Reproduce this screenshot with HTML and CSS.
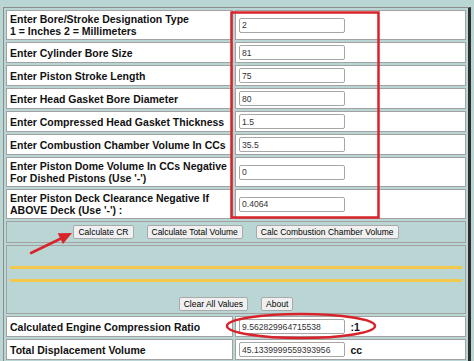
FILE: index.html
```html
<!DOCTYPE html>
<html lang="en">
<head>
  <meta charset="UTF-8">
  <title>Compression Ratio Calculator</title>
  <link rel="stylesheet" href="styles.css">
</head>
<body>
  <table class="calc">
    <tr>
      <td class="label">Enter Bore/Stroke Designation Type<br>1 = Inches 2 = Millimeters</td>
      <td class="field"><input type="text" value="2"></td>
    </tr>
    <tr>
      <td class="label">Enter Cylinder Bore Size</td>
      <td class="field"><input type="text" value="81"></td>
    </tr>
    <tr>
      <td class="label">Enter Piston Stroke Length</td>
      <td class="field"><input type="text" value="75"></td>
    </tr>
    <tr>
      <td class="label">Enter Head Gasket Bore Diameter</td>
      <td class="field"><input type="text" value="80"></td>
    </tr>
    <tr>
      <td class="label">Enter Compressed Head Gasket Thickness</td>
      <td class="field"><input type="text" value="1.5"></td>
    </tr>
    <tr>
      <td class="label">Enter Combustion Chamber Volume In CCs</td>
      <td class="field"><input type="text" value="35.5"></td>
    </tr>
    <tr>
      <td class="label">Enter Piston Dome Volume In CCs Negative<br>For Dished Pistons (Use '-')</td>
      <td class="field"><input type="text" value="0"></td>
    </tr>
    <tr>
      <td class="label">Enter Piston Deck Clearance Negative If<br>ABOVE Deck (Use '-') :</td>
      <td class="field"><input type="text" value="0.4064"></td>
    </tr>
    <tr>
      <td colspan="2" class="buttons">
        <div class="actions">
          <button>Calculate CR</button>
          <button>Calculate Total Volume</button>
          <button>Calc Combustion Chamber Volume</button>
        </div>
      </td>
    </tr>
    <tr>
      <td colspan="2" class="output">
        <hr class="gold">
        <div class="result"></div>
        <hr class="gold">
        <div class="actions lower">
          <button>Clear All Values</button>
          <button>About</button>
        </div>
      </td>
    </tr>
    <tr>
      <td class="label">Calculated Engine Compression Ratio</td>
      <td class="field"><input type="text" value="9.562829964715538"> <span class="unit">:1</span></td>
    </tr>
    <tr>
      <td class="label">Total Displacement Volume</td>
      <td class="field"><input type="text" value="45.1339999559393956"> <span class="unit">cc</span></td>
    </tr>
  </table>

  <svg class="marks" width="474" height="361" viewBox="0 0 474 361">
    <rect x="231.5" y="12.5" width="147" height="205" fill="none" stroke="#d9232b" stroke-width="2.5"/>
    <line x1="31" y1="253" x2="61" y2="238.5" stroke="#d9232b" stroke-width="2.5" stroke-linecap="round"/>
    <polygon points="72,233 62.9,244.1 57.7,233.3" fill="#d9232b"/>
    <ellipse cx="301" cy="326" rx="74" ry="12" fill="none" stroke="#d9232b" stroke-width="2.5"/>
  </svg>
</body>
</html>
```

FILE: styles.css
```css
html, body { overflow: hidden; }
body {
  margin: 7px 0 0 3px;
  background: #b9d5d4;
  font-family: 'Liberation Sans', Arial, sans-serif;
  color: #111;
}
.calc {
  width: 468px;
  border-spacing: 2px;
  border-top: 1px solid #8c8c8c;
  border-left: 1px solid #8c8c8c;
  border-right: 3px solid #2e2e2e;
  border-bottom: none;
}
.calc td {
  border: 1px solid #a2a2a2;
  padding: 2px 4px 2px 3px;
  line-height: 12px;
}
.label {
  width: 218px;
  background: #fff;
  font-size: 10.5px;
  font-weight: bold;
}
.field {
  background: #fff;
  padding-left: 4px;
}
.field input {
  box-sizing: border-box;
  width: 106px;
  height: 15px;
  margin: 0;
  padding: 0 2px;
  border: 1px solid #a6a6a6;
  border-radius: 2px;
  font-family: 'Liberation Sans', Arial, sans-serif;
  font-size: 8.6px;
  color: #333;
  vertical-align: middle;
}
.unit {
  margin-left: 1px;
  font-size: 10.5px;
  font-weight: bold;
  vertical-align: middle;
}
.calc td.buttons {
  padding: 3px;
  height: 13px;
}
.actions {
  display: flex;
  justify-content: center;
  gap: 13px;
}
.actions button {
  height: 14px;
  padding: 0 4px;
  border: 1px solid #a9a9a9;
  border-radius: 2px;
  background: #f0f0f0;
  font-family: 'Liberation Sans', Arial, sans-serif;
  font-size: 8.5px;
  line-height: 12px;
  color: #000;
}
.calc td.output {
  padding: 20px 3px 2px;
}
hr.gold {
  margin: 0;
  height: 3px;
  border: none;
  background: #f3c94d;
}
.result {
  height: 10px;
}
.actions.lower {
  margin-top: 15px;
}
.marks {
  position: absolute;
  top: 0;
  left: 0;
  pointer-events: none;
}
```
